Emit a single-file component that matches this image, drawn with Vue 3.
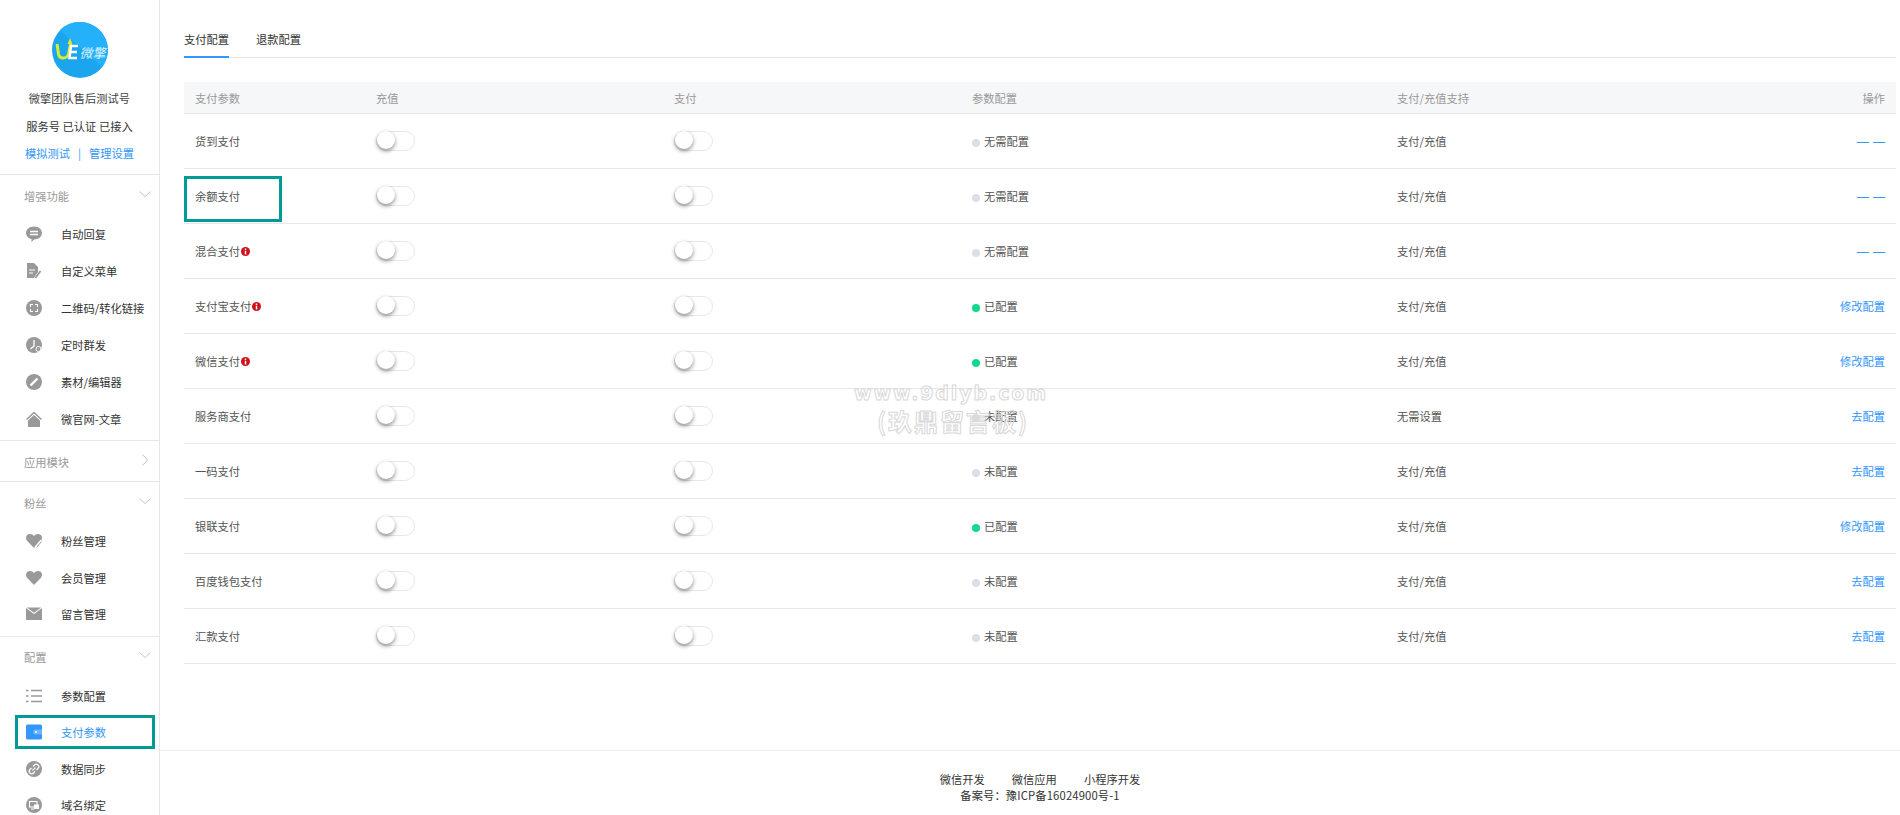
<script setup>
const sections = [
  {
    title: '增强功能',
    open: true,
    items: [
      { label: '自动回复', icon: 'chat' },
      { label: '自定义菜单', icon: 'doc' },
      { label: '二维码/转化链接', icon: 'qr' },
      { label: '定时群发', icon: 'clock' },
      { label: '素材/编辑器', icon: 'pen' },
      { label: '微官网-文章', icon: 'home' },
    ],
  },
  { title: '应用模块', open: false, items: [] },
  {
    title: '粉丝',
    open: true,
    compact: true,
    items: [
      { label: '粉丝管理', icon: 'heartpen' },
      { label: '会员管理', icon: 'heart' },
      { label: '留言管理', icon: 'mail' },
    ],
  },
  {
    title: '配置',
    open: true,
    compact: true,
    items: [
      { label: '参数配置', icon: 'list' },
      { label: '支付参数', icon: 'wallet', active: true },
      { label: '数据同步', icon: 'link' },
      { label: '域名绑定', icon: 'domain' },
    ],
  },
];

const rows = [
  { name: '货到支付', status: '无需配置', on: false, support: '支付/充值', action: '— —' },
  { name: '余额支付', status: '无需配置', on: false, support: '支付/充值', action: '— —', boxed: true },
  { name: '混合支付', warn: true, status: '无需配置', on: false, support: '支付/充值', action: '— —' },
  { name: '支付宝支付', warn: true, status: '已配置', on: true, support: '支付/充值', action: '修改配置' },
  { name: '微信支付', warn: true, status: '已配置', on: true, support: '支付/充值', action: '修改配置' },
  { name: '服务商支付', status: '未配置', on: false, support: '无需设置', action: '去配置' },
  { name: '一码支付', status: '未配置', on: false, support: '支付/充值', action: '去配置' },
  { name: '银联支付', status: '已配置', on: true, support: '支付/充值', action: '修改配置' },
  { name: '百度钱包支付', status: '未配置', on: false, support: '支付/充值', action: '去配置' },
  { name: '汇款支付', status: '未配置', on: false, support: '支付/充值', action: '去配置' },
];
</script>

<template>
  <div class="page">
    <aside class="sidebar">
      <div class="account">
        <svg class="logo" viewBox="0 0 56 56">
          <circle cx="28" cy="28" r="28" fill="#1ba5ee" />
          <path d="M28 0a28 28 0 0 1 22 45L8 8A28 28 0 0 1 28 0z" fill="#25b1f9" />
          <path d="M5 22l1.500 10q0.800 4 4.500 4 4.500 0 5.500-4l2-10" fill="none" stroke="#d9ec2b" stroke-width="3" />
          <path d="M15.500 22l2.500-6 2.500 6z" fill="#d9ec2b" />
          <path d="M26 24h-7l-1.500 12h7.500M18 30h7" fill="none" stroke="#fff" stroke-width="2.400" />
          <text class="logo-text" x="27.500" y="35.500">微擎</text>
        </svg>
        <div class="account-name">微擎团队售后测试号</div>
        <div class="account-type">服务号 已认证 已接入</div>
        <div class="account-links"><a>模拟测试</a><span class="sep">|</span><a>管理设置</a></div>
      </div>

      <section v-for="sec in sections" :key="sec.title" class="nav-section" :class="{ compact: sec.compact }">
        <div class="nav-title">
          <span>{{ sec.title }}</span>
          <svg class="chev" viewBox="0 0 12 12">
            <path v-if="sec.open" d="M0.500 3.500l5.500 5 5.500-5" />
            <path v-else d="M3.500 0.500l5 5.500-5 5.500" />
          </svg>
        </div>
        <div v-for="item in sec.items" :key="item.label" class="nav-item" :class="{ active: item.active }">
          <svg class="nav-icon" viewBox="0 0 16 16">
            <template v-if="item.icon === 'chat'">
              <path d="M8 0.500c4.400 0 8 2.800 8 6.500s-3.600 6.500-8 6.500l-2.500 2.500v-2.900C2.300 12.200 0 9.800 0 7 0 3.300 3.600 0.500 8 0.500z" fill="#999" />
              <path d="M4 5.500h8M4 8.500h8" stroke="#fff" stroke-width="1.300" />
            </template>
            <template v-else-if="item.icon === 'doc'">
              <path d="M1 0h7l4 4v5l-4 6H1z" fill="#999" />
              <path d="M3 7h6M3 10h4" stroke="#fff" stroke-width="1.200" />
              <path d="M14.500 8l-5 7" stroke="#999" stroke-width="1.800" />
            </template>
            <template v-else-if="item.icon === 'qr'">
              <circle cx="8" cy="8" r="8" fill="#999" />
              <path d="M4.500 7V4.500H7M9 4.500h2.500V7M4.500 9v2.500H7M9 11.500h2.500V9" fill="none" stroke="#fff" stroke-width="1.100" />
            </template>
            <template v-else-if="item.icon === 'clock'">
              <circle cx="8" cy="8" r="8" fill="#999" />
              <path d="M8 3v6L4.500 12" fill="none" stroke="#fff" stroke-width="1.300" />
              <circle cx="12.500" cy="12" r="2.500" fill="#999" stroke="#fff" stroke-width="1" />
            </template>
            <template v-else-if="item.icon === 'pen'">
              <circle cx="8" cy="8" r="8" fill="#999" />
              <path d="M4.500 11.500l7-7" stroke="#fff" stroke-width="2.400" />
            </template>
            <template v-else-if="item.icon === 'home'">
              <path d="M8 0.500L16 8l-1 1-7-6.500L1 9 0 8z" fill="#999" />
              <path d="M2 9.500L8 4l6 5.500V16H2z" fill="#999" />
            </template>
            <template v-else-if="item.icon === 'heartpen'">
              <path d="M8 15L1.200 8C-0.500 6-0.300 3 1.500 1.700 3.500 0.300 6.500 0.800 8 3c1.500-2.200 4.500-2.700 6.500-1.300 1.800 1.300 2 4.300 0.300 6.300z" fill="#999" />
              <path d="M15.500 7.500l-6 7" stroke="#fff" stroke-width="2.600" />
              <path d="M15.500 8.500l-5 6" stroke="#999" stroke-width="1" />
            </template>
            <template v-else-if="item.icon === 'heart'">
              <path d="M8 15L1.200 8C-0.500 6-0.300 3 1.500 1.700 3.500 0.300 6.500 0.800 8 3c1.500-2.200 4.500-2.700 6.500-1.300 1.800 1.300 2 4.300 0.300 6.300z" fill="#999" />
            </template>
            <template v-else-if="item.icon === 'mail'">
              <path d="M0 2l8 6 8-6V14H0z" fill="#999" />
              <path d="M0.800 1.500h14.400L8 6.800z" fill="#999" />
            </template>
            <template v-else-if="item.icon === 'list'">
              <path d="M0 2.500h2.500M5 2.500h11M0 8h2.500M5 8h11M0 13.500h2.500M5 13.500h11" stroke="#999" stroke-width="1.700" />
            </template>
            <template v-else-if="item.icon === 'wallet'">
              <rect x="0" y="0.500" width="16" height="15" rx="1.500" fill="#3296fa" />
              <path d="M16 5.500H9.500a2.500 2.500 0 0 0 0 5H16z" fill="#6db5fb" />
              <circle cx="10" cy="8" r="1" fill="#fff" />
            </template>
            <template v-else-if="item.icon === 'link'">
              <circle cx="8" cy="8" r="8" fill="#999" />
              <path d="M7 5.500l1.500-1.500a2 2 0 0 1 3.500 3.500L10.500 9M9 10.500L7.500 12a2 2 0 0 1-3.500-3.500L5.500 7M6.500 9.500l3-3" fill="none" stroke="#fff" stroke-width="1.200" />
            </template>
            <template v-else-if="item.icon === 'domain'">
              <circle cx="8" cy="8" r="8" fill="#999" />
              <rect x="3.500" y="4.500" width="7.500" height="5.500" fill="none" stroke="#fff" stroke-width="1.100" />
              <rect x="8" y="7.500" width="5" height="4.500" fill="#fff" />
              <path d="M5 12h3" stroke="#fff" stroke-width="1.100" />
            </template>
          </svg>
          <span>{{ item.label }}</span>
        </div>
      </section>
    </aside>

    <main class="main">
      <div class="content">
        <div class="tabs">
          <div class="tab active">支付配置</div>
          <div class="tab">退款配置</div>
        </div>
        <table class="pay-table">
          <colgroup>
            <col class="c1" /><col class="c2" /><col class="c3" /><col class="c4" /><col class="c5" /><col />
          </colgroup>
          <thead>
            <tr>
              <th>支付参数</th>
              <th>充值</th>
              <th>支付</th>
              <th>参数配置</th>
              <th>支付/充值支持</th>
              <th class="right">操作</th>
            </tr>
          </thead>
          <tbody>
            <tr v-for="row in rows" :key="row.name">
              <td class="name-cell">
                <span>{{ row.name }}</span>
                <svg v-if="row.warn" class="warn" viewBox="0 0 10 10">
                  <circle cx="5" cy="5" r="5" fill="#d0101c" />
                  <path d="M5 1.800v1.400M5 4.200v4" stroke="#fff" stroke-width="1.600" />
                </svg>
                <div v-if="row.boxed" class="mark-box"></div>
              </td>
              <td><span class="switch"><i></i></span></td>
              <td><span class="switch"><i></i></span></td>
              <td><span class="dot" :class="{ on: row.on }"></span>{{ row.status }}</td>
              <td>{{ row.support }}</td>
              <td class="right"><a :class="{ dash: row.action === '— —' }">{{ row.action }}</a></td>
            </tr>
          </tbody>
        </table>
      </div>

      <footer class="footer">
        <div class="footer-links"><span>微信开发</span><span>微信应用</span><span>小程序开发</span></div>
        <div class="footer-icp">备案号：豫ICP备16024900号-1</div>
      </footer>
    </main>

    <div class="watermark" aria-hidden="true">
      <div class="wm-url">www.9dlyb.com</div>
      <div class="wm-name">(玖鼎留言板)</div>
    </div>
  </div>
</template>

<style>
html,
body {
  margin: 0;
  height: 100%;
  overflow: hidden;
  background: #fff;
}
</style>

<style scoped>
.page {
  position: relative;
  display: flex;
  width: 1900px;
  height: 815px;
  overflow: hidden;
  font-family: "Noto Sans CJK SC", "Liberation Sans", sans-serif;
  font-size: 11.25px;
  color: #333;
  background: #fff;
}

.sidebar {
  flex: none;
  box-sizing: border-box;
  width: 160px;
  height: 815px;
  overflow: hidden;
  border-right: 1px solid #e7e7eb;
}

.account {
  height: 175px;
  box-sizing: border-box;
  padding-top: 22px;
  text-align: center;
  border-bottom: 1px solid #e7e7eb;
}

.logo {
  display: block;
  width: 56px;
  height: 56px;
  margin: 0 auto 10px;
}

.logo-text {
  font-size: 13px;
  font-style: italic;
  fill: #d8f1fd;
}

.account-name {
  line-height: 20px;
  color: #444;
}

.account-type {
  margin-top: 8px;
  line-height: 20px;
}

.account-links {
  margin-top: 7px;
  line-height: 20px;
  color: #3296fa;
}

.sep {
  margin: 0 8px;
}

.nav-section {
  box-sizing: border-box;
  border-bottom: 1px solid #e7e7eb;
}

.nav-section:has(.nav-item) {
  padding-bottom: 3px;
}

.nav-section:last-of-type {
  border-bottom: none;
}

.nav-title {
  display: flex;
  align-items: center;
  justify-content: space-between;
  height: 41px;
  margin-bottom: -1px;
  padding: 0 8px 0 24px;
  color: #999;
}

.compact .nav-title {
  margin-bottom: 0;
}

.chev {
  width: 12px;
  height: 12px;
  margin-top: -4px;
  fill: none;
  stroke: #b5b5b5;
  stroke-width: 0.800;
}

.nav-item {
  display: flex;
  align-items: center;
  height: 37px;
  padding-left: 26px;
  color: #333;
}

.compact .nav-item {
  height: 36.500px;
}

.nav-item.active {
  color: #3296fa;
}

.nav-icon {
  flex: none;
  width: 16px;
  height: 16px;
  margin-right: 19px;
}

/* annotation frame around the current menu item */
.nav-item.active::after {
  content: "";
  position: absolute;
  left: 15px;
  width: 140px;
  height: 34px;
  box-sizing: border-box;
  border: 3px solid #009b96;
}

.main {
  flex: 1;
  display: flex;
  flex-direction: column;
  min-width: 0;
}

.content {
  flex: 1;
  padding: 0 4px 0 24px;
}

.tabs {
  display: flex;
  height: 58px;
  box-sizing: border-box;
  border-bottom: 1px solid #e7e7eb;
  margin-bottom: 24px;
}

.tab {
  margin-right: 27px;
  height: 58px;
  box-sizing: border-box;
  line-height: 78px;
}

.tab.active {
  border-bottom: 2px solid #3296fa;
}

.pay-table {
  width: 100%;
  border-collapse: collapse;
  table-layout: fixed;
}

.c1 {
  width: 192px;
}

.c2,
.c3 {
  width: 298px;
}

.c4 {
  width: 425px;
}

.c5 {
  width: 300px;
}

th {
  height: 31px;
  padding: 0 11px 0 0;
  font-weight: 400;
  text-align: left;
  color: #999;
  background: #f6f7f9;
  border-bottom: 1px solid #e7e7eb;
}

td {
  height: 54px;
  padding: 0 11px 0 0;
  color: #555;
  border-bottom: 1px solid #e7e7eb;
}

th:first-child,
td:first-child {
  padding-left: 11px;
}

th.right,
td.right {
  text-align: right;
}

a {
  color: #3296fa;
}

.dash {
  font-family: "Liberation Sans", sans-serif;
  font-size: 12px;
  word-spacing: 1px;
}

.name-cell {
  position: relative;
}

.warn {
  width: 9px;
  height: 9px;
  margin-left: 1px;
}

.mark-box {
  position: absolute;
  left: 0;
  top: 7px;
  width: 98px;
  height: 46px;
  box-sizing: border-box;
  border: 3px solid #009b96;
}

.switch {
  display: block;
  position: relative;
  width: 39px;
  height: 20px;
  box-sizing: border-box;
  border: 1px solid #e7e7eb;
  border-radius: 10px;
  background: #fff;
}

.switch i {
  position: absolute;
  left: 0;
  top: -1px;
  width: 18px;
  height: 18px;
  border-radius: 50%;
  background: #fff;
  box-shadow: 0 2px 4px rgba(0, 0, 0, 0.45);
}

.dot {
  display: inline-block;
  width: 8px;
  height: 8px;
  margin-right: 4px;
  border-radius: 50%;
  background: #dcdfe8;
  vertical-align: -0.5px;
}

.dot.on {
  background: #13d88c;
}

.footer {
  flex: none;
  height: 65px;
  box-sizing: border-box;
  padding: 20px 0 0 20px;
  text-align: center;
  line-height: 16px;
  color: #333;
  border-top: 1px solid #eee;
}

.footer-links span {
  margin: 0 13.500px;
}

.footer-icp {
  letter-spacing: 0.150px;
}

.watermark {
  position: absolute;
  left: 851px;
  top: 379px;
  width: 200px;
  text-align: center;
  font-family: "DejaVu Sans", "Noto Sans CJK SC", sans-serif;
  font-weight: 700;
  color: transparent;
  -webkit-text-stroke: 1px #d8d8d8;
  pointer-events: none;
}

.wm-url {
  font-size: 19px;
  letter-spacing: 1.900px;
  line-height: 28px;
}

.wm-name {
  padding-left: 4px;
  font-family: "Noto Sans CJK SC", sans-serif;
  font-size: 24px;
  letter-spacing: 2px;
  line-height: 28px;
}
</style>
